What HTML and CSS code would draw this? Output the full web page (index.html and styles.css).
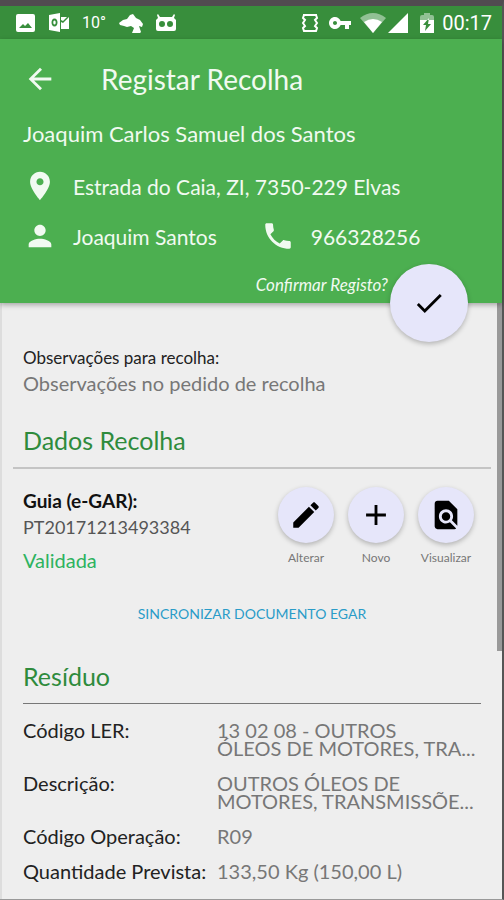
FILE: index.html
```html
<!DOCTYPE html>
<html lang="pt">
<head>
    <meta charset="UTF-8">
    <meta name="viewport" content="width=device-width, initial-scale=1.0">
    <title>Registar Recolha</title>
    <link rel="stylesheet" href="styles.css">
</head>
<body>
    <div class="screen">
        <!-- Status bar -->
        <div class="status-bar">
            <div class="status-group">
                <svg class="status-icon" viewBox="0 0 20 20"><path fill-rule="evenodd" d="M2 1h15a2 2 0 0 1 2 2v14a2 2 0 0 1-2 2H2a2 2 0 0 1-2-2V3a2 2 0 0 1 2-2zM3 15h13l-4-5-3 3-2-2z"/></svg>
                <svg class="status-icon" viewBox="0 0 20 20"><path fill-rule="evenodd" d="M0 2l11-2v19L0 17zM5.5 5.500c-2 0-3 1.700-3 4s1 4 3 4 3-1.700 3-4-1-4-3-4zm0 2c.8 0 1.200.8 1.200 2s-.4 2-1.200 2-1.200-.8-1.200-2 .4-2 1.200-2z"/><path d="M12 4h6l-4 4-2-1zM12 9l2 1 6-6v12h-8z"/></svg>
                <span class="temperature">10°</span>
                <svg class="status-icon wide" viewBox="0 0 24 20"><path d="M0 10l4-3 4-1 3-4 3-1 3 4 4 2 3 4-1 3-3-1 2 6-1 1h-8l2-5-3-2-4 1-3-1-4-1z"/></svg>
                <svg class="status-icon" viewBox="0 0 20 20"><path fill-rule="evenodd" d="M2 1l2 3h12l2-3 1 1-1 3 2 2v9a2 2 0 0 1-2 2H2a2 2 0 0 1-2-2V7l2-2-1-3zM6 8a3 3 0 1 0 0 6 3 3 0 0 0 0-6zm8 0a3 3 0 1 0 0 6 3 3 0 0 0 0-6z"/></svg>
            </div>
            <div class="status-group right">
                <svg class="status-icon" viewBox="0 0 20 20"><path fill="none" stroke="#fff" stroke-width="2" d="M4 2h12l1 3-2 2 2 3-2 3 2 2-1 3H4l-1-3 2-2-2-3 2-3-2-2zM3 2h14M3 18h14"/></svg>
                <svg class="status-icon key" viewBox="0 0 24 24"><path d="M12.65 10C11.83 7.67 9.61 6 7 6c-3.310 0-6 2.690-6 6s2.690 6 6 6c2.610 0 4.830-1.670 5.650-4H17v4h4v-4h2v-4H12.65zM7 14c-1.100 0-2-.9-2-2s.9-2 2-2 2 .9 2 2-.9 2-2 2z"/></svg>
                <svg class="status-icon wifi" viewBox="0 0 26 20"><path opacity=".45" d="M0 5Q13-5 26 5L13 20z"/><path d="M4 9q9-6 18 0l-9 11z"/></svg>
                <svg class="status-icon signal" viewBox="0 0 20 20"><path d="M0 20L20 0v20z"/></svg>
                <svg class="status-icon battery" viewBox="0 0 14 20"><path opacity=".45" d="M0 7V4q0-2 2-2h2V0h6v2h2q2 0 2 2v3z"/><path fill-rule="evenodd" d="M0 7h14v13H0zM9 5l-6 7h3l-1 6 6-7H8z"/></svg>
                <span class="clock">00:17</span>
            </div>
        </div>

        <!-- Header -->
        <header class="header">
            <div class="toolbar">
                <button class="back" aria-label="Voltar">
                    <svg class="icon" viewBox="0 0 24 24"><path d="M20 11H7.830l5.590-5.590L12 4l-8 8 8 8 1.410-1.410L7.830 13H20v-2z"/></svg>
                </button>
                <h1>Registar Recolha</h1>
            </div>
            <p class="client">Joaquim Carlos Samuel dos Santos</p>
            <div class="info-row">
                <svg class="icon" viewBox="0 0 24 24"><path d="M12 2C8.130 2 5 5.130 5 9c0 5.250 7 13 7 13s7-7.750 7-13c0-3.870-3.130-7-7-7zm0 9.500c-1.380 0-2.500-1.120-2.500-2.500s1.120-2.500 2.500-2.500 2.500 1.120 2.500 2.500-1.120 2.500-2.500 2.500z"/></svg>
                <span>Estrada do Caia, ZI, 7350-229 Elvas</span>
            </div>
            <div class="info-row two">
                <div class="info-item">
                    <svg class="icon" viewBox="0 0 24 24"><path d="M12 12c2.210 0 4-1.790 4-4s-1.790-4-4-4-4 1.790-4 4 1.790 4 4 4zm0 2c-2.670 0-8 1.340-8 4v2h16v-2c0-2.660-5.330-4-8-4z"/></svg>
                    <span>Joaquim Santos</span>
                </div>
                <div class="info-item">
                    <svg class="icon" viewBox="0 0 24 24"><path d="M6.620 10.790c1.440 2.830 3.760 5.140 6.590 6.590l2.200-2.200c.27-.27.67-.36 1.020-.24 1.120.37 2.330.57 3.570.57.55 0 1 .45 1 1V20c0 .55-.45 1-1 1-9.390 0-17-7.610-17-17 0-.55.45-1 1-1h3.500c.55 0 1 .45 1 1 0 1.250.2 2.450.57 3.570.11.35.03.74-.25 1.020l-2.200 2.200z"/></svg>
                    <span>966328256</span>
                </div>
            </div>
            <div class="confirm">
                <label for="confirmButton">Confirmar Registo?</label>
                <button id="confirmButton" class="fab large">
                    <svg class="icon" viewBox="0 0 24 24"><path d="M9 16.170L4.830 12l-1.420 1.410L9 19 21 7l-1.410-1.410z"/></svg>
                </button>
            </div>
        </header>

        <main class="content">
            <section class="notes">
                <h3>Observações para recolha:</h3>
                <p>Observações no pedido de recolha</p>
            </section>

            <h2>Dados Recolha</h2>
            <section class="guide">
                <div class="guide-text">
                    <h3>Guia (e-GAR):</h3>
                    <p class="guide-number">PT20171213493384</p>
                    <p class="guide-status">Validada</p>
                </div>
                <div class="actions">
                    <div class="action">
                        <button id="editButton" class="fab">
                            <svg class="icon" viewBox="0 0 24 24"><path d="M3 17.250V21h3.750L17.810 9.940l-3.750-3.750L3 17.250zM20.710 7.040c.39-.39.39-1.020 0-1.410l-2.340-2.340c-.39-.39-1.020-.39-1.410 0l-1.830 1.830 3.750 3.750 1.830-1.830z"/></svg>
                        </button>
                        <label for="editButton">Alterar</label>
                    </div>
                    <div class="action">
                        <button id="newButton" class="fab">
                            <svg class="icon" viewBox="0 0 24 24"><path d="M19 13h-6v6h-2v-6H5v-2h6V5h2v6h6v2z"/></svg>
                        </button>
                        <label for="newButton">Novo</label>
                    </div>
                    <div class="action">
                        <button id="viewButton" class="fab">
                            <svg class="icon" viewBox="0 0 24 24"><path d="M20 19.590V8l-6-6H6c-1.100 0-1.990.9-1.990 2L4 20c0 1.100.89 2 1.990 2H18c.45 0 .85-.15 1.190-.4l-4.430-4.430c-.8.52-1.740.83-2.760.83-2.760 0-5-2.240-5-5s2.240-5 5-5 5 2.240 5 5c0 1.020-.31 1.960-.83 2.750L20 19.590zM9 13c0 1.660 1.340 3 3 3s3-1.340 3-3-1.340-3-3-3-3 1.340-3 3z"/></svg>
                        </button>
                        <label for="viewButton">Visualizar</label>
                    </div>
                </div>
            </section>
            <button class="sync">SINCRONIZAR DOCUMENTO EGAR</button>

            <section class="waste">
                <h2>Resíduo</h2>
                <dl>
                    <dt>Código LER:</dt>
                    <dd>13 02 08 - OUTROS<br>ÓLEOS DE MOTORES, TRA...</dd>
                    <dt>Descrição:</dt>
                    <dd>OUTROS ÓLEOS DE<br>MOTORES, TRANSMISSÕE...</dd>
                    <dt>Código Operação:</dt>
                    <dd>R09</dd>
                    <dt>Quantidade Prevista:</dt>
                    <dd>133,50 Kg (150,00 L)</dd>
                </dl>
            </section>
            <div class="scrollbar"></div>
        </main>
    </div>
</body>
</html>
```

FILE: styles.css
```css
* {
    margin: 0;
    padding: 0;
    box-sizing: border-box;
    font-family: Lato, sans-serif;
}

body {
    background: #eee;
    color: #222;
}

.screen {
    min-height: 100vh;
    display: flex;
    flex-direction: column;
    border-top: 6px solid #514b50;
    border-right: 2px solid #555;
    border-bottom: 1px solid #999;
}

button {
    background: none;
    border: none;
    cursor: pointer;
}

h1, h2, dt, .notes h3 {
    font-weight: 400;
}

.icon {
    display: block;
    flex: none;
    width: 34px;
    height: 34px;
    fill: currentColor;
}

/* Status bar */
.status-bar {
    display: flex;
    justify-content: space-between;
    align-items: center;
    height: 33px;
    padding: 0 10px 0 16px;
    background: #388e3c;
    color: #fff;
}

.status-group {
    display: flex;
    align-items: center;
    gap: 13px;
}

.status-group.right {
    gap: 8px;
}

.status-icon {
    width: 20px;
    height: 20px;
    fill: #fff;
}

.status-icon.wide,
.status-icon.key {
    width: 24px;
}

.status-icon.key {
    height: 24px;
}

.status-icon.wifi {
    width: 26px;
}

.status-icon.signal {
    margin-left: -6px;
}

.status-icon.battery {
    width: 14px;
    margin-left: 4px;
}

.temperature {
    font-family: "Liberation Sans Narrow", Roboto, sans-serif;
    font-size: 16px;
}

.clock {
    font-family: Roboto, sans-serif;
    font-size: 20px;
}

/* Header */
.header {
    position: relative;
    z-index: 1;
    height: 264px;
    padding: 0 23px;
    background: #4caf50;
    color: #f1faf1;
    box-shadow: 0 2px 5px rgba(0,0,0,0.3);
}

.toolbar {
    display: flex;
    align-items: center;
    gap: 44px;
    height: 80px;
}

.back {
    color: inherit;
}

h1 {
    font-size: 28px;
}

.client {
    font-size: 22px;
    line-height: 30px;
    margin-bottom: 20px;
}

.info-row {
    display: flex;
    align-items: center;
    height: 34px;
    font-size: 21px;
    gap: 16px;
    margin-bottom: 16px;
}

.info-item {
    display: flex;
    align-items: center;
    gap: 16px;
}

.info-row.two {
    gap: 44px;
}

.fab {
    display: flex;
    align-items: center;
    justify-content: center;
    flex: none;
    width: 56px;
    height: 56px;
    border-radius: 50%;
    background: #e6e6fa;
    color: #000;
    box-shadow: 0 2px 5px rgba(0,0,0,0.25);
}

.fab.large {
    width: 78px;
    height: 78px;
}

.confirm {
    position: absolute;
    right: 34px;
    bottom: -39px;
    display: flex;
    gap: 2px;
}

.confirm label {
    padding-top: 10px;
    font-size: 17px;
    font-style: italic;
}

/* Content */
.content {
    position: relative;
    flex: 1;
    padding: 44px 11px 0;
    border-left: 2px solid #ddd;
}

.notes {
    padding: 0 10px;
    margin-bottom: 26px;
}

.notes h3 {
    font-size: 17px;
    line-height: 22px;
}

.notes p {
    font-size: 20px;
    line-height: 28px;
    color: #777;
}

h2 {
    padding: 0 10px 10px;
    font-size: 25px;
    line-height: 34px;
    color: #2e8b3c;
    border-bottom: 2px solid #c4c4c4;
}

.guide {
    display: flex;
    justify-content: space-between;
    padding: 18px 10px 0;
}

.guide-text h3 {
    font-size: 19px;
    line-height: 28px;
    color: #111;
}

.guide-number {
    font-size: 18px;
    line-height: 24px;
    color: #555;
}

.guide-status {
    font-size: 20px;
    line-height: 42px;
    color: #2db35f;
}

.actions {
    display: flex;
}

.action {
    display: flex;
    flex-direction: column;
    align-items: center;
    gap: 6px;
    width: 70px;
}

.action label {
    font-size: 12px;
    line-height: 18px;
    color: #777;
}

.sync {
    display: block;
    margin: 16px auto 28px;
    font-size: 14px;
    line-height: 34px;
    color: #2a9cc8;
}

.waste {
    padding: 0 10px;
}

.waste h2 {
    padding-left: 0;
    border-bottom: 1px solid #777;
}

dl {
    display: grid;
    grid-template-columns: 194px 1fr;
    row-gap: 17px;
    padding-top: 17px;
    font-size: 20px;
    line-height: 18px;
}

dd {
    color: #777;
    white-space: nowrap;
}

.scrollbar {
    position: absolute;
    top: 0;
    right: 0;
    width: 5px;
    height: 348px;
    background: #999;
}
```
